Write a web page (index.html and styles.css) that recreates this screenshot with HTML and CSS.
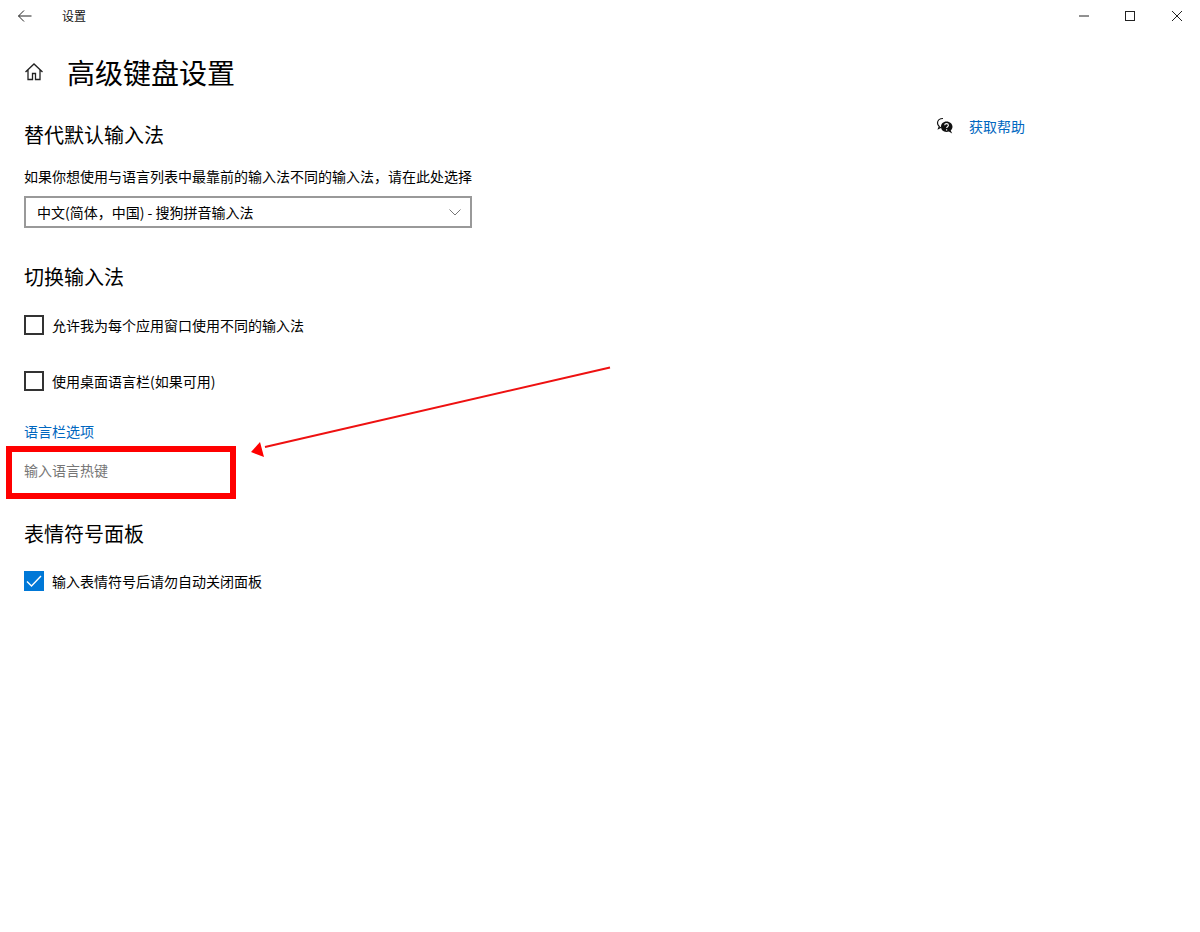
FILE: index.html
```html
<!DOCTYPE html>
<html lang="zh-CN">
<head>
<meta charset="utf-8">
<title>设置</title>
<link rel="stylesheet" href="styles.css">
</head>
<body>
<header class="titlebar">
  <svg class="back" width="16" height="14" viewBox="0 0 16 14"><path d="M14.5 7H1.5M7 1.5 1.5 7 7 12.5" fill="none" stroke="#222" stroke-width="1"/></svg>
  <span class="app-name">设置</span>
  <div class="win-controls">
    <svg class="win-btn" width="46" height="32" viewBox="0 0 46 32"><path d="M17 16h10" stroke="#222" stroke-width="1"/></svg>
    <svg class="win-btn" width="46" height="32" viewBox="0 0 46 32"><rect x="17.5" y="11.5" width="9" height="9" fill="none" stroke="#222" stroke-width="1"/></svg>
    <svg class="win-btn" width="46" height="32" viewBox="0 0 46 32"><path d="M18 11l10 10M28 11 18 21" fill="none" stroke="#222" stroke-width="1"/></svg>
  </div>
</header>
<div class="page">
  <main class="content">
    <div class="page-title">
      <svg class="home" width="20" height="20" viewBox="0 0 20 20"><path d="M1.5 10 10 2l8.500 8M4 8v9.500h4.500V11.500h3v6H16V8" fill="none" stroke="#222" stroke-width="1.300"/></svg>
      <h1>高级键盘设置</h1>
    </div>
    <h2 class="first">替代默认输入法</h2>
    <p class="desc">如果你想使用与语言列表中最靠前的输入法不同的输入法，请在此处选择</p>
    <div class="select">
      <span>中文(简体，中国) - 搜狗拼音输入法</span>
      <svg width="12" height="7" viewBox="0 0 12 7"><path d="M.5.5 6 6 11.500.5" fill="none" stroke="#777" stroke-width="1"/></svg>
    </div>
    <h2 class="switch">切换输入法</h2>
    <label class="check first-check"><span class="box"></span>允许我为每个应用窗口使用不同的输入法</label>
    <label class="check second-check"><span class="box"></span>使用桌面语言栏(如果可用)</label>
    <a class="link lang-link">语言栏选项</a>
    <div class="disabled">输入语言热键</div>
    <h2 class="emoji">表情符号面板</h2>
    <label class="check emoji-check"><span class="box checked"><svg width="20" height="20" viewBox="0 0 20 20"><path d="M3 10.500 7.500 15 17 5" fill="none" stroke="#fff" stroke-width="1.400"/></svg></span>输入表情符号后请勿自动关闭面板</label>
  </main>
  <aside class="help">
    <svg width="18" height="18" viewBox="0 0 18 18">
      <path d="M7 1.500C3.800 1.500 1.500 3.400 1.500 6c0 1.400.7 2.600 1.800 3.400L2.500 11.500l2.700-1.200" fill="#fff" stroke="#111" stroke-width="1.200"/>
      <path d="M10.500 4.500c3.300 0 6 2.300 6 5.200 0 1.500-.7 2.800-1.800 3.700l1.500 3-3.400-1.800c-.7.2-1.500.3-2.300.3-3.300 0-5.500-2.300-5.500-5.200s2.200-5.200 5.500-5.200z" fill="#111"/>
      <path d="M8.700 8.300c0-2.200 3.700-2.200 3.700 0 0 1.400-1.800 1.400-1.800 2.800" fill="none" stroke="#fff" stroke-width="1.100"/>
      <path d="M10 12.200h1.200v1.300H10z" fill="#fff"/>
    </svg>
    <a class="link">获取帮助</a>
  </aside>
</div>
<div class="marker"></div>
<svg class="arrow" width="370" height="100" viewBox="0 0 370 100">
  <path d="M360 7.500 15 87" fill="none" stroke="#ee1111" stroke-width="2"/>
  <path d="M1 92 10 82 14 97z" fill="#ff0000"/>
</svg>
</body>
</html>
```
FILE: styles.css
```css
html, body {
  margin: 0;
  padding: 0;
  background: #fff;
}
body {
  position: relative;
  height: 932px;
  overflow: hidden;
  font-family: "Noto Sans CJK SC", "Noto Sans", sans-serif;
  font-size: 14px;
  line-height: 20px;
  color: #000;
}
.titlebar {
  display: flex;
  align-items: center;
  height: 32px;
}
.back {
  margin-left: 17px;
}
.app-name {
  margin-left: 29px;
  font-size: 12px;
  color: #111;
}
.win-controls {
  display: flex;
  margin-left: auto;
}
.win-btn {
  display: block;
}
.page {
  display: flex;
}
.content {
  width: 912px;
  padding-left: 24px;
}
.page-title {
  display: flex;
  align-items: center;
  height: 40px;
  margin-top: 20px;
}
.home {
  flex: none;
}
h1 {
  margin: 0 0 0 23px;
  font-size: 28px;
  line-height: 40px;
  font-weight: 400;
}
h2 {
  margin: 0;
  font-size: 20px;
  line-height: 28px;
  font-weight: 400;
}
h2.first {
  margin-top: 29px;
}
h2.switch {
  margin-top: 35px;
}
h2.emoji {
  margin-top: 40px;
}
.desc {
  margin: 17px 0 10px;
}
.select {
  box-sizing: border-box;
  display: flex;
  align-items: center;
  justify-content: space-between;
  width: 448px;
  height: 32px;
  padding: 0 9px 0 11px;
  border: 2px solid #999;
}
.check {
  display: flex;
  align-items: center;
  height: 20px;
}
.first-check {
  margin-top: 24px;
}
.second-check {
  margin-top: 36px;
}
.emoji-check {
  margin-top: 23px;
}
.box {
  box-sizing: border-box;
  flex: none;
  width: 20px;
  height: 20px;
  margin-right: 8px;
  border: 2px solid #333;
}
.box.checked {
  border: 0;
  background: #0078d7;
}
.box svg {
  display: block;
}
.link {
  color: #0067c0;
}
.lang-link {
  display: block;
  margin-top: 30px;
}
.disabled {
  margin-top: 19px;
  color: #767676;
}
.help {
  display: flex;
  align-items: center;
  gap: 15px;
  height: 20px;
  margin-top: 84px;
}
.marker {
  position: absolute;
  left: 6px;
  top: 446px;
  box-sizing: border-box;
  width: 230px;
  height: 53px;
  border: 6px solid #ff0000;
}
.arrow {
  position: absolute;
  left: 250px;
  top: 360px;
}
```
